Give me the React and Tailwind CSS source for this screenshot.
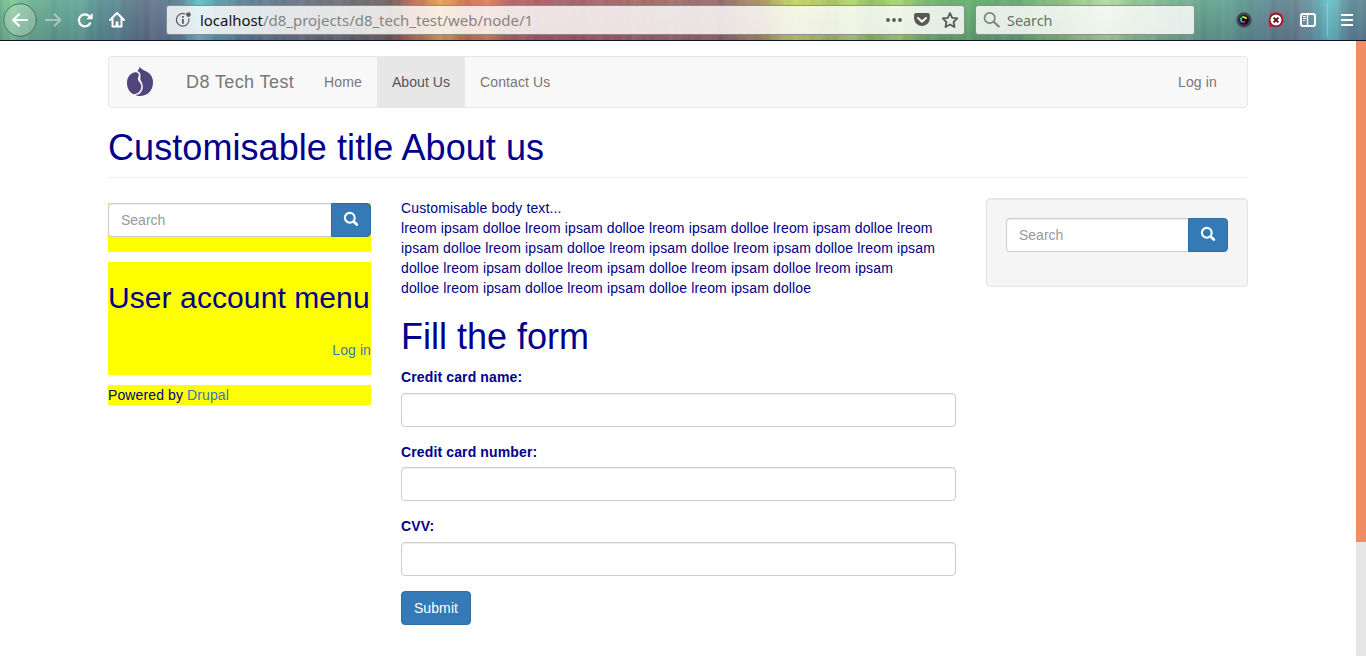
import React from "react";

const inset = "shadow-[inset_0_1px_1px_rgba(0,0,0,0.075)]";

function Glass() {
  return (
    <svg width="16" height="16" viewBox="0 0 16 16" fill="none" stroke="#fff" className="-mt-[2px]">
      <circle cx="6.8" cy="6.8" r="4.9" strokeWidth="2.1" />
      <path d="M10.6 10.6 L13.8 13.6" strokeWidth="2.8" strokeLinecap="round" />
    </svg>
  );
}

function SearchGroup() {
  return (
    <div className="flex h-[34px]">
      <div className={`flex min-w-0 flex-1 items-center rounded-l border border-r-0 border-[#ccc] bg-white px-3 text-[#999] ${inset}`}>
        Search
      </div>
      <button className="flex w-10 shrink-0 items-center justify-center rounded-r border border-[#2e6da4] bg-[#337ab7]">
        <Glass />
      </button>
    </div>
  );
}

function Field({ label }) {
  return (
    <div className="mb-[15px]">
      <label className="mb-[5.5px] block h-5 font-bold leading-5">{label}</label>
      <div className={`h-[34px] rounded border border-[#ccc] bg-white ${inset}`} />
    </div>
  );
}

function Toolbar() {
  return (
    <header className="relative flex h-[41px] shrink-0 items-center border-b border-[#0a1428] bg-[linear-gradient(90deg,#63ae86_0px,#7ccb95_12px,#62a98c_40px,#5fa696_75px,#538990_110px,#5d6f85_150px,#567f93_180px,#60c0cc_200px,#5494a4_220px,#58788d_255px,#65707f_300px,#666a70_340px,#6c5b57_390px,#b9634c_412px,#e3a14f_440px,#cf704c_465px,#dc7b50_490px,#b0605c_510px,#a15a62_560px,#a26362_640px,#9b6965_680px,#936365_720px,#a88d5c_760px,#c4d85f_795px,#a8bf5a_830px,#b0d868_850px,#8fbe60_870px,#a2d670_900px,#6fb365_925px,#5fae68_960px,#5ba76c_1010px,#83bd73_1060px,#b2dc9e_1105px,#8fc98d_1130px,#7bb88d_1160px,#62a58b_1200px,#5c9f90_1230px,#5b8790_1265px,#638090_1300px,#62c2c9_1330px,#5a8795_1350px,#5c8794_1366px)]">
      <div className="pointer-events-none absolute inset-0 bg-[repeating-linear-gradient(90deg,rgba(255,255,255,0)_0px,rgba(255,255,255,0.04)_3px,rgba(0,0,0,0.02)_8px,rgba(255,255,255,0.03)_13px,rgba(255,255,255,0)_23px),repeating-linear-gradient(90deg,rgba(255,255,255,0)_0px,rgba(255,255,255,0.04)_5px,rgba(0,0,0,0.02)_17px,rgba(255,255,255,0)_37px),linear-gradient(180deg,rgba(255,255,255,0.07),rgba(50,30,80,0.17))]" />
      <div className="relative flex h-full w-full items-center">
        <svg width="166" height="40" viewBox="0 0 166 40" className="shrink-0" fill="none" stroke="#fff" strokeWidth="2.2" strokeLinecap="round" strokeLinejoin="round">
          <circle cx="20" cy="20" r="16.3" fill="#fff" fillOpacity=".22" stroke="#38594f" strokeOpacity=".75" strokeWidth="1" />
          <path d="M27 20 H13.5 M19 14.2 L13.2 20 L19 25.8" />
          <path d="M46 20 H60 M54.5 14.2 L60.3 20 L54.5 25.8" opacity=".42" />
          <path d="M89.3 16.2 A6 6 0 1 0 90.5 22.5" strokeLinecap="butt" strokeWidth="2.2" />
          <path d="M92.6 12.9 V19.2 H86.3 Z" fill="#fff" stroke="none" />
          <path d="M110 20 L117 13 L124 20 M112.5 19 V26.6 H121.5 V19" strokeWidth="2" />
          <path d="M115.6 26.5 V21.5 H118.4 V26.5" fill="#fff" stroke="none" />
        </svg>
        <div className="flex h-[30px] w-[799px] shrink-0 items-center rounded-[3px] border border-black/40 bg-white/82">
          <svg width="33" height="28" viewBox="0 0 33 28" className="shrink-0" fill="none" stroke="#5d5d5d">
            <path d="M18.2 8 A6.3 6.3 0 1 0 21.8 12.2" strokeWidth="1.2" />
            <circle cx="21.4" cy="8.6" r="2.4" fill="#5d5d5d" stroke="none" />
            <path d="M15.9 10 V11.8 M15.9 13 V17.8" strokeWidth="1.8" />
          </svg>
          <svg width="336" height="28" viewBox="0 0 336 28" className="shrink-0 font-['Noto_Sans']" fontSize="14">
            <text x="0" y="20" fill="#111" textLength="63" lengthAdjust="spacingAndGlyphs">localhost</text>
            <text x="63" y="20" fill="#858585" textLength="270" lengthAdjust="spacingAndGlyphs">/d8_projects/d8_tech_test/web/node/1</text>
          </svg>
          <svg width="80" height="28" viewBox="884 6 80 28" className="ml-auto shrink-0" fill="#585858">
            <circle cx="888" cy="20" r="1.9" /><circle cx="894" cy="20" r="1.9" /><circle cx="900" cy="20" r="1.9" />
            <path d="M916 13 H928 Q929.8 13 929.8 14.8 V19 A7.9 7.9 0 0 1 914.1 19 V14.8 Q914.1 13 916 13Z" />
            <path d="M918 18 L922 21.6 L926 18" fill="none" stroke="#f3f8ea" strokeWidth="2.1" strokeLinecap="round" strokeLinejoin="round" />
            <path d="M950 13 L952.2 17.8 L957.3 18.4 L953.6 22 L954.5 27 L950 24.5 L945.5 27 L946.4 22 L942.7 18.4 L947.8 17.8Z" fill="none" stroke="#585858" strokeWidth="1.8" strokeLinejoin="round" />
          </svg>
        </div>
        <div className="ml-[10px] flex h-[30px] w-[220px] shrink-0 items-center rounded-[3px] border border-black/40 bg-white/82">
          <svg width="90" height="28" viewBox="976 6 90 28" className="shrink-0 font-['Noto_Sans']" fontSize="14">
            <circle cx="989.7" cy="18" r="5.2" fill="none" stroke="#808080" strokeWidth="1.7" />
            <path d="M993.5 21.5 L999.3 27" stroke="#808080" strokeWidth="2.2" />
            <text x="1007" y="26" fill="#6b706b" textLength="45.5" lengthAdjust="spacingAndGlyphs">Search</text>
          </svg>
        </div>
        <svg width="171" height="40" viewBox="1195 0 171 40" className="shrink-0">
          <circle cx="1244" cy="20" r="7.5" fill="#3d4048" stroke="#5b646b" strokeWidth=".7" />
          <circle cx="1244" cy="20" r="4.8" fill="#0b0b12" />
          <path d="M1240.8 20 A3.2 3.2 0 0 1 1244 16.8" fill="none" stroke="#29cd43" strokeWidth="2" />
          <path d="M1243.5 16.9 L1246.8 18.6" stroke="#e6dc2d" strokeWidth="1.8" />
          <path d="M1240.8 19.6 L1242 22.4" stroke="#22afe8" strokeWidth="2" />
          <path d="M1242.3 22.4 L1245.3 21.5" stroke="#d42cc3" strokeWidth="1.7" />
          <path d="M1270 13.5 L1276 12 L1282 14 L1284 21 L1281 26.5 L1269 27 L1268.4 21Z" fill="#cf2630" />
          <circle cx="1276" cy="20" r="6.1" fill="#fff" stroke="#671823" strokeWidth="1.1" />
          <path d="M1273.6 17.6 L1278.4 22.4 M1278.4 17.6 L1273.6 22.4" stroke="#551019" strokeWidth="2" />
          <rect x="1301" y="14" width="14" height="12" rx="2" fill="none" stroke="#fff" strokeWidth="2" />
          <path d="M1307.5 14 V26" stroke="#fff" strokeWidth="1.4" />
          <path d="M1303 16.5 H1306 M1303 18.5 H1306 M1303 20.5 H1305" stroke="#fff" />
          <path d="M1327.5 3 V37" stroke="#fff" strokeOpacity=".25" />
          <path d="M1341 15 H1353 M1341 20 H1353 M1341 25 H1353" stroke="#fff" strokeWidth="2" />
        </svg>
      </div>
    </header>
  );
}

function Navbar() {
  return (
    <nav className="flex h-[52px] overflow-hidden rounded border border-[#e7e7e7] bg-[#f8f8f8] text-[#777]">
      <svg width="47" height="50" viewBox="109 57 47 50" className="shrink-0">
        <path d="M137.6 71.2 C138 69.8 139.3 69 139.5 67 C141.5 69.5 144 70.3 147 71.8 C151 74 153 78 153 82.5 C153 91 147 96 140 96 C137.8 96 136 95.5 135.5 95 C140.3 94.8 142.8 91 142.8 86.5 C142.8 81.8 139.6 80.7 140.4 77.6 C141.1 74.5 140 71.9 137.6 71.2Z" fill="#50457d" />
        <path d="M135.8 72.2 C139 72.6 139.4 75 138.2 77.3 C136.6 81.2 141.3 82.2 141.3 86.6 C141.3 91 137.6 94.3 133.8 94.3 C129.3 92.5 127 88 127 83 C127 77 130.5 72.4 135.8 72.2Z" fill="#50457d" />
      </svg>
      <div className="flex items-center pl-[30px] pr-[15px] text-[18px]"><span className="w-[109px] whitespace-nowrap tracking-[0.4px]">D8 Tech Test</span></div>
      <div className="flex w-[67px] items-center pl-[14px] tracking-[0.12px]">Home</div>
      <div className="flex w-[88px] items-center justify-center bg-[#e7e7e7] tracking-[0.08px] text-[#555]">About Us</div>
      <div className="flex items-center px-[15px] tracking-[0.12px]">Contact Us</div>
      <div className="ml-auto flex items-center pr-[30px] tracking-[0.14px]">Log in</div>
    </nav>
  );
}

export default function App() {
  return (
    <div className="flex h-[656px] w-[1366px] flex-col overflow-hidden bg-white font-['Liberation_Sans',Arial,sans-serif] text-[14px] leading-5 text-[#00008b]">
      <Toolbar />
      <div className="flex min-h-0 flex-1">
        <div className="w-[1356px] pl-[108px] pr-[108px] pt-[15px]">
          <Navbar />
          <h1 className="mt-5 h-[50px] border-b border-[#eee] text-[36px] leading-[40px] tracking-[0.07px]">Customisable title About us</h1>
          <div className="mt-5 flex items-start">
            <aside className="mt-[5px] flex w-[263px] shrink-0 flex-col gap-[10px]">
              <div className="bg-[#ff0] pb-[15px]"><SearchGroup /></div>
              <div className="h-[113px] bg-[#ff0] pt-[19px]">
                <h2 className="whitespace-nowrap text-[30px] leading-[33px] tracking-[0.09px]">User account menu</h2>
                <div className="mt-[26px] text-right tracking-[0.1px] text-[#337ab7]">Log in</div>
              </div>
              <div className="bg-[#ff0] tracking-[0.11px]">Powered by <span className="text-[#337ab7]">Drupal</span></div>
            </aside>
            <main className="ml-[30px] w-[555px] shrink-0">
              <p className="whitespace-nowrap tracking-[0.137px]">
                Customisable body text...<br />
                lreom ipsam dolloe lreom ipsam dolloe lreom ipsam dolloe lreom ipsam dolloe lreom<br />
                ipsam dolloe lreom ipsam dolloe lreom ipsam dolloe lreom ipsam dolloe lreom ipsam<br />
                dolloe lreom ipsam dolloe lreom ipsam dolloe lreom ipsam dolloe lreom ipsam<br />
                dolloe lreom ipsam dolloe lreom ipsam dolloe lreom ipsam dolloe
              </p>
              <h2 className="mb-[10.3px] mt-[19px] text-[36px] leading-[40px]">Fill the form</h2>
              <div className="tracking-[0.13px]">
                <Field label="Credit card name:" />
                <Field label="Credit card number:" />
                <Field label="CVV:" />
              </div>
              <button className="h-[34px] w-[70px] rounded border border-[#2e6da4] bg-[#337ab7] tracking-[0.1px] text-white">Submit</button>
            </main>
            <aside className="ml-[30px] h-[89px] w-[262px] shrink-0 rounded border border-[#e3e3e3] bg-[#f5f5f5] p-[19px] shadow-[inset_0_1px_1px_rgba(0,0,0,0.05)]">
              <SearchGroup />
            </aside>
          </div>
        </div>
        <div className="w-[10px] shrink-0 bg-[#e6e6e6]"><div className="h-[501px] bg-[#f08d66]" /></div>
      </div>
    </div>
  );
}
